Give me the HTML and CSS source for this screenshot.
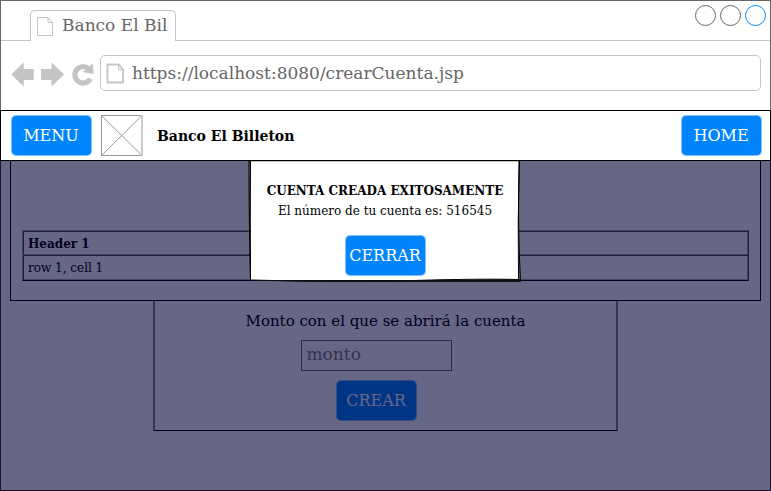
FILE: index.html
```html
<!DOCTYPE html>
<html lang="es">
<head>
<meta charset="utf-8">
<title>Banco El Billeton</title>
<link rel="stylesheet" href="styles.css">
</head>
<body>
<div class="window">
  <div class="tabbar">
    <div class="tab">
      <svg class="tab-icon" width="17" height="20" viewBox="0 0 17 20"><path d="M.5 .5H11L15.500 5.500V18.500H.5ZM11 .5V5.500H15.500" fill="none" stroke="#c4c4c4"/></svg>
      <span>Banco El Bil</span>
    </div>
    <svg class="controls" width="72" height="22" viewBox="0 0 72 22" fill="none"><circle cx="11.500" cy="10.500" r="10" stroke="#666"/><circle cx="36.500" cy="10.500" r="10" stroke="#666"/><circle cx="61.500" cy="10.500" r="10" stroke="#008cff"/></svg>
  </div>
  <div class="toolbar">
    <svg class="nav" width="84" height="26" viewBox="0 0 84 26">
      <path d="M.3 12.500L12.700 .3V7H22.700V18H12.700V24.500ZM53 12.500L40.500 .3V7H30V18H40.500V24.500Z" fill="#c4c4c4"/>
      <path d="M77.500 6.700A8.200 8.200 0 1 0 79.300 16.800" fill="none" stroke="#c4c4c4" stroke-width="5.200"/>
      <path d="M81.700 1.500L82.700 12L71.700 10Z" fill="#c4c4c4"/>
    </svg>
    <div class="address">
      <svg class="page-icon" width="18" height="21" viewBox="0 0 18 21"><path d="M1.500 1.500H12.500L17 6.500V19.500H1.500Z" fill="none" stroke="#c4c4c4" stroke-width="1.800"/><path d="M12.500 1.500V6.500H17" fill="none" stroke="#c4c4c4"/></svg>
      <span>https://localhost:8080/crearCuenta.jsp</span>
    </div>
  </div>
  <header class="header">
    <button class="btn menu">MENU</button>
    <svg class="logo" width="42" height="41" viewBox="0 0 42 41" fill="none"><path d="M41 .5H.5V40.500H41M.5 .5L41 40.500M41 .5L.5 40.500" stroke="#999"/><path d="M41 0V41" stroke="#ccc" stroke-width="2"/></svg>
    <h1 class="brand">Banco El Billeton</h1>
    <button class="btn home">HOME</button>
  </header>
  <main class="content">
    <section class="accounts">
      <div class="grid">
        <div class="cell head">Header 1</div>
        <div class="cell">row 1, cell 1</div>
      </div>
    </section>
    <section class="create">
      <label class="label">Monto con el que se abrirá la cuenta</label>
      <div class="amount">monto</div>
      <button class="btn">CREAR</button>
    </section>
    <div class="overlay"></div>
    <div class="dialog">
      <svg class="sketch" width="274" height="122" viewBox="0 0 274 122">
        <path d="M3 0H271V119H3Z" fill="#fff"/>
        <path d="M1 0Q.8 40 2.500 119M2.500 0L2 60L2.500 119M3 119Q100 121.500 165 119.500T273 118.500M3 119.500L273 120M271.500 0Q269.500 60 270.500 118M271 0Q269.500 70 272.500 119" fill="none" stroke="#000" stroke-width="1"/>
        <path d="M3 119L140 119.500L273 118V121H165Q100 121.500 3 119.500Z" fill="#111"/>
        <path d="M3 .300H271" stroke="#777" stroke-width=".6"/>
      </svg>
      <h2 class="dialog-title">CUENTA CREADA EXITOSAMENTE</h2>
      <p class="dialog-text">El número de tu cuenta es: 516545</p>
      <button class="btn">CERRAR</button>
    </div>
  </main>
</div>
</body>
</html>
```
FILE: styles.css
```css
* { box-sizing: border-box; }
body { margin: 0; font-family: "DejaVu Serif", serif; background: #fff; }
h1, h2, p { margin: 0; }
.window { width: 771px; height: 491px; overflow: hidden; background: #fff; border-top: 1px solid #666; display: flex; flex-direction: column; }
.tabbar { height: 40px; flex: none; display: flex; justify-content: space-between; border: solid #666; border-width: 0 1px; background: linear-gradient(#c4c4c4, #c4c4c4) bottom / 100% 1px no-repeat; padding-left: 29px; }
.tab { width: 146px; height: 31px; margin-top: 9px; border: 1px solid #c4c4c4; border-bottom: 0; border-radius: 5px 5px 0 0; background: #fff; display: flex; align-items: flex-start; font-size: 17px; line-height: 20px; color: #666; white-space: nowrap; }
.tab-icon { margin: 6px 8px 0 6px; flex: none; }
.tab span { margin-top: 4px; }
.controls { margin: 4px 4px 0 0; }
.toolbar { height: 69px; flex: none; display: flex; align-items: flex-start; border: solid #666; border-width: 0 1px; padding: 14px 9px 0 10px; gap: 5px; }
.nav { margin-top: 7px; flex: none; }
.address { flex: 1; height: 36px; border: 1px solid #c4c4c4; border-radius: 5px; display: flex; align-items: center; padding-left: 5px; gap: 8px; color: #666; font-size: 17px; line-height: 20px; }
.header { height: 51px; flex: none; display: flex; align-items: flex-start; border: 1px solid #000; padding: 4px 8px 0 10px; }
.btn { width: 81px; height: 41px; padding: 0; flex: none; border: 1px solid rgba(0, 133, 255, .5); border-radius: 5px; background: #0085ff; background-clip: padding-box; color: #fff; font: 16px/38px "DejaVu Serif", serif; }
.menu { padding-right: 1px; }
.logo { margin-left: 9px; }
.brand { font: bold 14px/40px "DejaVu Serif", serif; margin-left: 14px; padding-top: 1px; }
.home { margin-left: auto; padding-right: 1px; }
.content { position: relative; flex: 1; border: 1px solid #333; border-top: 0; }
.accounts { width: 751px; height: 140px; margin-left: 9px; border: 1px solid #000; border-top: 0; padding: 69px 11px 0; }
.grid { border: 1px solid #aaa; border-right-color: #444; border-bottom-color: #000; height: 51px; display: grid; grid-template-rows: 25px 24px; box-shadow: inset 1px 1px #444, inset -1px -1px #aaa; }
.cell { font: 12px/24px "DejaVu Serif", serif; padding-left: 5px; color: #000; }
.head { font-weight: bold; padding-top: 1px; border-bottom: 1px solid #444; box-shadow: inset 0 -1px #aaa; }
.create { width: 465px; height: 130px; margin-left: 152px; border: solid #888; border-width: 0 2px 1px; border-bottom-color: #000; display: flex; flex-direction: column; align-items: center; }
.label { font-size: 15px; line-height: 18px; margin-top: 11px; }
.amount { width: 151px; height: 31px; border: 1px solid #666; margin: 10px 19px 9px 0; padding-left: 5px; font-size: 17px; line-height: 27px; color: #808080; }
.create .btn { margin-right: 19px; }
.overlay { position: absolute; inset: 0 -1px -1px; background: rgba(0, 0, 51, .6); }
.dialog { position: absolute; left: 247px; top: 0; width: 274px; height: 122px; display: flex; flex-direction: column; align-items: center; }
.sketch { position: absolute; left: 0; top: 0; }
.dialog-title, .dialog-text, .dialog .btn { position: relative; }
.dialog-title { font: bold 12px/20px "DejaVu Serif", serif; margin-top: 20px; white-space: nowrap; }
.dialog-text { font: 12px/20px "DejaVu Serif", serif; margin-bottom: 14px; }
```
